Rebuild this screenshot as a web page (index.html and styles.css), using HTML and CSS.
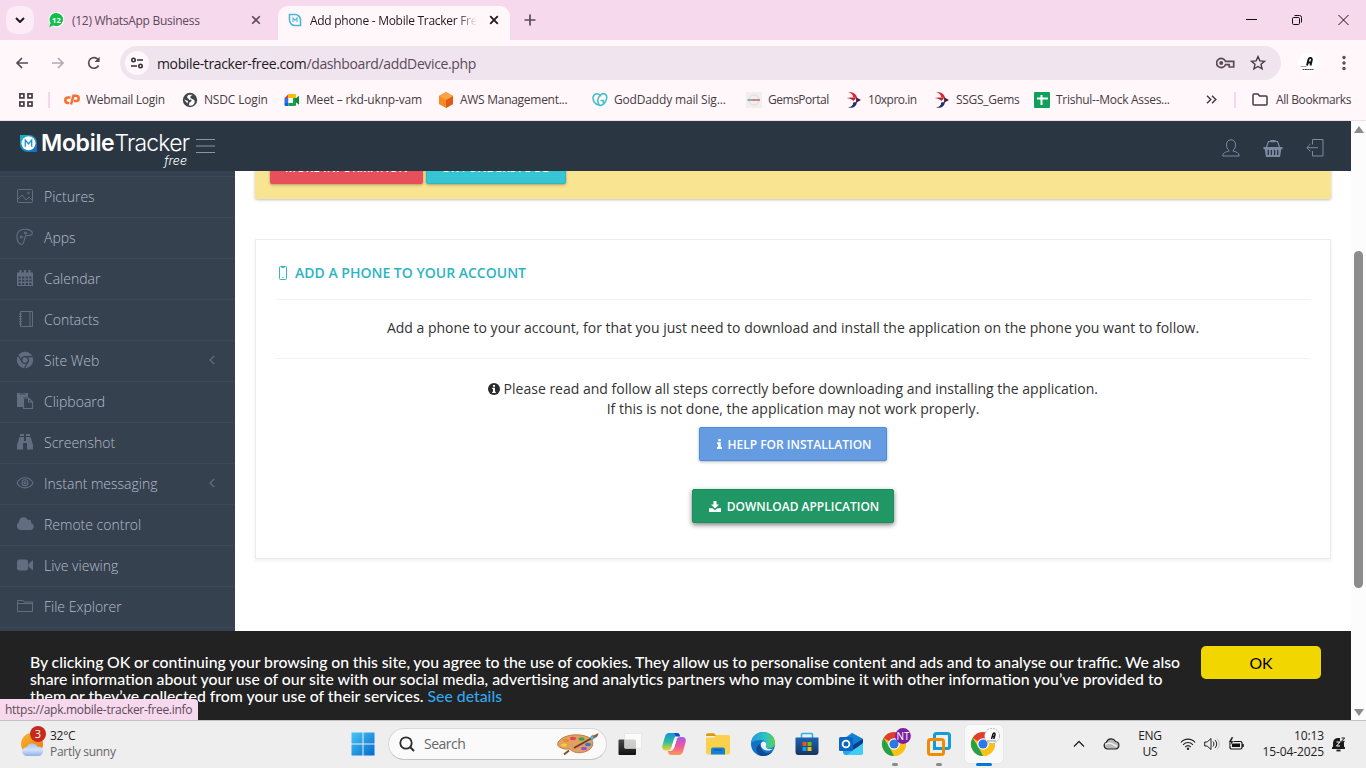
FILE: index.html
```html
<!DOCTYPE html>
<html lang="en">
<head>
<meta charset="utf-8">
<title>Add phone - Mobile Tracker Free</title>
<link rel="stylesheet" href="styles.css">
</head>
<body>
<div class="tabs">
  <div class="tab-search"><svg width="10" height="6" viewBox="0 0 10 6"><path d="M1 1l4 4 4-4" fill="none" stroke="#1f1a1e" stroke-width="2"/></svg></div>
  <div class="tab tab-wa">
    <svg class="fav" width="16" height="16" viewBox="0 0 16 16"><circle cx="8.5" cy="7.5" r="7.8" fill="#fff"/><path d="M8.5.9a6.6 6.6 0 1 1-3 12.5L1.2 15l1.4-4A6.6 6.6 0 0 1 8.5.9z" fill="#12bf4b"/><text x="8.4" y="10.8" text-anchor="middle" class="wa-num">12</text></svg>
    <span class="seg tab-title">(12) WhatsApp Business</span>
    <svg class="close" width="10" height="10" viewBox="0 0 10 10"><path d="M1.2 1.2l7.6 7.6M8.8 1.2L1.2 8.8" stroke="#5b4a58" stroke-width="1.6"/></svg>
  </div>
  <div class="tab tab-active">
    <svg class="fav" width="14" height="14" viewBox="0 0 14 14"><path d="M1.500 1.500h5.500a5.500 5.500 0 0 1 5.500 5.500v5.500H7A5.500 5.500 0 0 1 1.500 7z" fill="#fff" stroke="#4fb3d6" stroke-width="1.600"/><path d="M5 9.200V5l2 2.400L9 5v4.200" fill="none" stroke="#5fbbe0" stroke-width="1.200"/></svg>
    <span class="seg tab-title fade">Add phone - Mobile Tracker Free</span>
    <svg class="close" width="10" height="10" viewBox="0 0 10 10"><path d="M1.2 1.2l7.6 7.6M8.8 1.2L1.2 8.8" stroke="#1f1a1e" stroke-width="1.8"/></svg>
  </div>
  <svg class="newtab" width="12" height="12" viewBox="0 0 12 12"><path d="M6 .5v11M.5 6h11" stroke="#5b4a58" stroke-width="1.7"/></svg>
  <svg class="win" width="110" height="12" viewBox="0 0 110 12"><g fill="none" stroke="#111" stroke-width="1"><path d="M0 5.500h11"/><rect x="46.500" y="3.500" width="7" height="7" rx="1.200"/><path d="M48.500 1.500h5a2 2 0 0 1 2 2v5M92.500 1l10 10M102.500 1l-10 10"/></g></svg>
</div>
<div class="toolbar">
  <svg class="nav" width="14" height="12" viewBox="0 0 14 12"><path d="M13 6H2M7 1L2 6l5 5" fill="none" stroke="#5b4a58" stroke-width="1.7"/></svg>
  <svg class="nav" width="14" height="12" viewBox="0 0 14 12"><path d="M1 6h11M7 1l5 5-5 5" fill="none" stroke="#b5a9b2" stroke-width="1.7"/></svg>
  <svg class="nav" width="14" height="14" viewBox="0 0 14 14"><path d="M11.600 9.500A5.300 5.300 0 1 1 11.500 4.200" fill="none" stroke="#5b4a58" stroke-width="1.700"/><path d="M12.600.8v5.200H7.500z" fill="#5b4a58"/></svg>
  <div class="url">
    <span class="site"><svg width="12" height="12" viewBox="0 0 12 12"><g fill="none" stroke="#352d34" stroke-width="1.600"><circle cx="2.500" cy="3" r="1.700"/><path d="M6 3h6M0 9h6"/><circle cx="9.500" cy="9" r="1.700"/></g></svg></span>
    <span class="addr">mobile-tracker-free.com<span class="path">/dashboard/addDevice.php</span></span>
    <svg width="19" height="12" viewBox="0 0 19 12"><g fill="none" stroke="#5b4a58" stroke-width="1.700"><path d="M9.500 4.300A4.600 4.600 0 1 0 9.500 7.700h3.700v2.300h4.500V4.300z"/></g><circle cx="5.200" cy="6" r="2" fill="#5b4a58"/></svg>
    <svg width="16" height="16" viewBox="0 0 16 16"><path d="M8 1.600l1.900 4.300 4.700.4-3.600 3 1.100 4.600L8 11.500l-4.100 2.400L5 9.300l-3.600-3 4.700-.4z" fill="none" stroke="#463c44" stroke-width="1.400"/></svg>
  </div>
  <svg class="avatar" width="20" height="20" viewBox="0 0 20 20"><circle cx="10" cy="10" r="10" fill="#fff"/><path d="M9 12.500l1.500-6c.7-2.500 3.700-2 3.300.5L12.500 12.500M10 9.500h3.500" fill="none" stroke="#111" stroke-width="1.900"/><path d="M2.500 13.500h6" stroke="#888" stroke-width=".8"/><path d="M4.500 16.500h11" stroke="#444" stroke-width="1.200" stroke-dasharray="2 .4"/></svg>
  <svg class="dots" width="4" height="16" viewBox="0 0 4 16"><g fill="#5b4a58"><circle cx="2" cy="2.500" r="1.700"/><circle cx="2" cy="8" r="1.700"/><circle cx="2" cy="13.500" r="1.700"/></g></svg>
</div>
<div class="bookmarks">
  <svg class="apps" width="14" height="14" viewBox="0 0 14 14"><g fill="none" stroke="#463c44" stroke-width="1.700"><rect x=".9" y=".9" width="4" height="4"/><rect x="9" y=".9" width="4" height="4"/><rect x=".9" y="9" width="4" height="4"/><rect x="9" y="9" width="4" height="4"/></g></svg>
  <i class="vline"></i>
  <div class="bm-list seg">
    <span class="bm"><svg width="16" height="16" viewBox="0 0 16 16"><path d="M6.500 5.500H4A2.600 2.600 0 0 0 4 11h1.200M7 12.500L9.400 3.800h2.700a2.500 2.500 0 0 1 0 5.200H9.800" fill="none" stroke="#f6732f" stroke-width="2.500"/></svg>Webmail Login</span>
    <span class="bm wide"><svg width="16" height="16" viewBox="0 0 16 16"><circle cx="8" cy="8" r="7.200" fill="#40464b"/><path d="M10.500 3C6 2 4 4.500 6 6.500c1.500 1.200 4 .6 3.500 2.500-.4 1.200-1.700.5-2.200 2L6.800 13.500c4.200.8 6.500-2 5.700-5C11.500 7 8.500 7 8.300 5.300c0-1 1-1.600 2.200-2.300z" fill="#fff"/><path d="M2 7.500l4 1.500-.5 2.500z" fill="#fff"/></svg>NSDC Login</span>
    <span class="bm wide"><svg width="16" height="16" viewBox="0 0 16 16"><path d="M.5 6L4.500 2v4z" fill="#e8402f"/><path d="M4.500 2h6.500a1 1 0 0 1 1 1v3H4.500z" fill="#fbbc05"/><path d="M.5 6h4v5h-4z" fill="#2a74e8"/><path d="M.5 11h4v3H1.500a1 1 0 0 1-1-1z" fill="#1a5fd0"/><path d="M4.500 11H9V6h3v7a1 1 0 0 1-1 1H4.500z" fill="#12a34a"/><path d="M4.500 6H9v5H4.500z" fill="#fff"/><path d="M11 7l4-3.300v9L11 9.500z" fill="#0b8a3d"/></svg>Meet – rkd-uknp-vam</span>
    <span class="bm"><svg width="16" height="16" viewBox="0 0 16 16"><path d="M8 0l7 4v8l-7 4-7-4V4z" fill="#f58a25"/><path d="M8 8l7-4v8l-7 4z" fill="#dd5b14"/><path d="M8 0l7 4-7 4-7-4z" fill="#fba342"/></svg>AWS Management...</span>
    <span class="bm wide"><svg width="16" height="16" viewBox="0 0 17 16"><path d="M8 13.500C3 13 .5 8.500 1.300 4.500 2.600.5 7 .3 9.500 4M8 13.500C5 10 6 4.500 9.500 2.300 13 0 16.500 2 15.500 6.500 14.500 11 11 14.500 8 13.500zM9 8.500h3v3" fill="none" stroke="#45c1c9" stroke-width="1.700"/></svg>GodDaddy mail Sig...</span>
    <span class="bm tight"><svg width="16" height="16" viewBox="0 0 16 16"><path d="M0 0h16v16H0z" fill="#f1efed"/><circle cx="8" cy="8" r="5" fill="none" stroke="#dedbd8"/><path d="M1.500 8h6" stroke="#8591b4" stroke-width="1.600"/><path d="M7 8h7" stroke="#cf6870" stroke-width="1.600"/></svg>GemsPortal</span>
    <span class="bm tight"><svg width="16" height="16" viewBox="0 0 16 16"><path d="M2 .5c5-1.200 8.500 1.500 9 5.500L7 5.500C7.500 3 5.500 1 2 .5z" fill="#e02330"/><path d="M.5 6C4 5 8 5.500 10 6.500L7 9c0-1.500-2.500-2.500-6.500-3z" fill="#b8202f"/><path d="M9.500 5L15 8l-5.500 3c1-2 1-4 0-6z" fill="#4a173c"/><path d="M2 15.500c5 1.200 8.500-1 9-5.500l-4 .5c.5 2.500-1.500 4.500-5 5z" fill="#22306e"/></svg>10xpro.in</span>
    <span class="bm"><svg width="16" height="16" viewBox="0 0 16 16"><path d="M2 .5c5-1.200 8.500 1.500 9 5.500L7 5.500C7.500 3 5.500 1 2 .5z" fill="#e02330"/><path d="M.5 6C4 5 8 5.500 10 6.500L7 9c0-1.500-2.500-2.500-6.500-3z" fill="#b8202f"/><path d="M9.500 5L15 8l-5.500 3c1-2 1-4 0-6z" fill="#4a173c"/><path d="M2 15.500c5 1.200 8.500-1 9-5.500l-4 .5c.5 2.500-1.500 4.500-5 5z" fill="#22306e"/></svg>SSGS_Gems</span>
    <span class="bm"><svg width="16" height="16" viewBox="0 0 16 16"><rect width="16" height="16" rx="1" fill="#10a05b"/><path d="M7.500 3v10M3 6.500h11" stroke="#fff" stroke-width="2"/></svg>Trishul--Mock Asses...</span>
  </div>
  <svg class="more" width="11" height="9" viewBox="0 0 11 9"><path d="M1 .7l3.800 3.800L1 8.300M6 .7l3.800 3.800L6 8.300" fill="none" stroke="#463c44" stroke-width="1.500"/></svg>
  <i class="vline"></i>
  <svg class="folder" width="16" height="13" viewBox="0 0 16 13"><path d="M1 11V2a1 1 0 0 1 1-1h4l1.500 2H14a1 1 0 0 1 1 1v7a1 1 0 0 1-1 1H2a1 1 0 0 1-1-1z" fill="none" stroke="#463c44" stroke-width="1.500"/></svg>
  <span class="seg all">All Bookmarks</span>
</div>
<div class="viewport">
  <div class="page">
    <header class="top">
      <svg class="logo-mark" width="17" height="18" viewBox="0 0 17 18"><defs><linearGradient id="lm" x2="1" y2="1"><stop offset="0" stop-color="#17b8c0"/><stop offset="1" stop-color="#1667c8"/></linearGradient></defs><path d="M0 1h9a8 8 0 0 1 8 8v9H8a8 8 0 0 1-8-8z" fill="url(#lm)"/><circle cx="8.500" cy="9.300" r="7" fill="#fff"/><path d="M5.300 12.800V6l3.200 4 3.200-4v6.800" fill="none" stroke="#1b90c8" stroke-width="1.300"/></svg>
      <div class="logo"><div class="logo-line"><b>Mobile</b><span>Tracker</span></div><i>free</i></div>
      <svg class="burger" width="19" height="14" viewBox="0 0 19 14"><path d="M0 .5h19M0 7h19M0 13.500h19" stroke="#8b96a5" stroke-width="1"/></svg>
      <div class="top-icons">
        <svg width="18" height="18" viewBox="0 0 18 18"><path d="M6.800 11v1.200C3.500 13 .8 13.500.8 17h16.400c0-3.500-2.700-4-6-4.800V11c1.500-1 2.300-2.700 2.300-5 0-3.300-1.700-5.200-4.500-5.200S4.500 2.700 4.500 6c0 2.300.8 4 2.300 5z" fill="none" stroke="#7b8aa3"/></svg>
        <svg width="20" height="19" viewBox="0 0 20 19"><path d="M3.500 8L5.500 2.500H7.500M16.500 8l-2-5.500h-2" fill="none" stroke="#7b8aa3" stroke-width="1.200"/><rect x="7" y="1" width="6" height="2.200" rx="1" fill="#7b8aa3"/><path d="M.5 8h19v2.200h-1.200L17 18H3L1.700 10.200H.5z" fill="#7b8aa3"/><path d="M5.300 11v5M8.400 11v5M11.600 11v5M14.700 11v5" stroke="#2b3643" stroke-width="1.300"/></svg>
        <svg width="18" height="18" viewBox="0 0 18 18"><path d="M6.500 5.500v-5h10.500v16.500H6.500v-5M12 8.700H1M4.500 5L.8 8.700l3.700 3.700" fill="none" stroke="#7b8aa3"/></svg>
      </div>
    </header>
    <div class="body">
      <nav class="side">
        <div class="stub"></div>
        <a><svg width="18" height="18" viewBox="0 0 18 18"><g fill="none" stroke="#626e80"><rect x="1.500" y="2.500" width="15" height="13" rx=".8"/><path d="M2 12l4-4 4 5 3-3 3.500 3.500"/><circle cx="12.500" cy="6" r=".8"/></g></svg>Pictures</a>
        <a><svg width="18" height="18" viewBox="0 0 18 18"><g fill="none" stroke="#626e80" stroke-width="1.100"><path d="M4 2.500C8 .3 15 1 16.300 4.500 17 7 14 7.800 11 7.500c-2 0-2.200 2-2.700 4C8 14 7 16.800 5.300 16.500 2.500 15.500 1 12 1 8.500 1 6 2 3.500 4 2.500z"/><circle cx="9.500" cy="5" r="1"/><circle cx="5.300" cy="9" r="1"/></g></svg>Apps</a>
        <a><svg width="18" height="18" viewBox="0 0 18 18"><path d="M1 3.500h16V17H1z" fill="#626e80"/><path d="M4.500 1v4M9 1v4M13.500 1v4" stroke="#626e80" stroke-width="2"/><path d="M2.500 7.500h2.300v2H2.500zM6 7.500h2.300v2H6zM9.700 7.500H12v2H9.700zM13.200 7.500h2.300v2h-2.300zM2.500 10.700h2.300v2H2.500zM6 10.700h2.300v2H6zM9.700 10.700H12v2H9.700zM13.200 10.700h2.300v2h-2.300zM2.500 13.900h2.300v2H2.500zM6 13.900h2.300v2H6zM9.700 13.900H12v2H9.700zM13.200 13.900h2.300v2h-2.300z" fill="#364150"/></svg>Calendar</a>
        <a><svg width="18" height="18" viewBox="0 0 18 18"><g fill="none" stroke="#626e80"><path d="M4.500 1.500h12v15h-12zM14 1.500v15M3 4h3M3 6.500h3M3 9h3M3 11.500h3M3 14h3"/></g></svg>Contacts</a>
        <a><svg width="18" height="18" viewBox="0 0 18 18"><circle cx="9" cy="9" r="8.200" fill="#626e80"/><circle cx="9" cy="9" r="3.400" fill="none" stroke="#364150" stroke-width="1.300"/><path d="M9 5.600h8M6 10.700L2 4M12 10.700L8.500 17" stroke="#364150" stroke-width="1.200"/></svg>Site Web<svg class="chev" width="6" height="10" viewBox="0 0 6 10"><path d="M5.200 1L1 5l4.200 4" fill="none" stroke="#626e80" stroke-width="1.200"/></svg></a>
        <a><svg width="18" height="18" viewBox="0 0 18 18"><path d="M1 1h11v4H7v10H1z" fill="#626e80"/><path d="M3.500 2h6" stroke="#364150"/><path d="M7.500 6h5l4 4v6.500h-9zM12.500 6v4h4" fill="#364150" stroke="#626e80" stroke-width="1.200"/></svg>Clipboard</a>
        <a><svg width="18" height="18" viewBox="0 0 18 18"><path d="M4 1h4v2H4zM10 1h4v2h-4zM3.500 4H8v4h2V4h4.500L17 12v4.500h-6V10H7v6.500H1V12z" fill="#626e80"/></svg>Screenshot</a>
        <a><svg width="18" height="18" viewBox="0 0 18 18"><g fill="none" stroke="#626e80" stroke-width="1.100"><path d="M1 9c3.500-7 12.500-7 16 0-3.500 6.500-12.500 6.500-16 0z"/><circle cx="9" cy="8.800" r="3"/><circle cx="9" cy="8.800" r="1"/></g></svg>Instant messaging<svg class="chev" width="6" height="10" viewBox="0 0 6 10"><path d="M5.200 1L1 5l4.200 4" fill="none" stroke="#626e80" stroke-width="1.200"/></svg></a>
        <a><svg width="18" height="18" viewBox="0 0 18 18"><path d="M4.500 15A4.200 4.200 0 0 1 3 7.200C3 2 10 .5 11.800 5c2.500-.8 4 1 3.200 3 4 1.200 3.500 7-.5 7z" fill="#626e80"/></svg>Remote control</a>
        <a><svg width="18" height="18" viewBox="0 0 18 18"><rect x="1" y="3.500" width="11" height="11" rx="2.300" fill="#626e80"/><path d="M12.500 8L17 4v10.500l-4.500-4z" fill="#626e80"/></svg>Live viewing</a>
        <a><svg width="18" height="18" viewBox="0 0 18 18"><path d="M1.500 14.500v-11H7l1 1.500h8.500v9.500zM1.500 6.500h15" fill="none" stroke="#626e80"/></svg>File Explorer</a>
        <div class="tail"></div>
      </nav>
      <main class="main">
        <div class="alert"><span class="btn red">More information</span><span class="btn teal">OK I understood</span></div>
        <section class="panel">
          <h1><svg width="10" height="16" viewBox="0 0 10 16"><rect x="1.500" y="1.500" width="7" height="13" rx="1" fill="none" stroke="#32b6c4"/><path d="M3.500 2.500h3M4.500 12.500h1" stroke="#32b6c4"/></svg>Add a phone to your account</h1>
          <p class="lead">Add a phone to your account, for that you just need to download and install the application on the phone you want to follow.</p>
          <p class="note"><svg width="12" height="12" viewBox="0 0 12 12"><circle cx="6" cy="6" r="6" fill="#2b2b2b"/><path d="M5 2h2v1.700H5zM4.200 4.800H7V8.700h.8V10H4.200V8.700H5V6h-.8z" fill="#fff"/></svg> Please read and follow all steps correctly before downloading and installing the application.<br>If this is not done, the application may not work properly.</p>
          <div class="btn blue"><svg width="5" height="10" viewBox="0 0 6 12"><path d="M1.500 0H4.500V2.600H1.500zM0 4h4.500v5.500H6V12H0V9.500h1.300V6H0z" fill="#fff"/></svg>Help for installation</div>
          <div class="btn green"><svg width="12" height="11" viewBox="0 0 12 11"><path d="M4.500 0h3v3.500H10L6 7.600 2 3.500h2.500zM0 7.200h3.500L6 9.300l2.500-2.100H12V11H0z" fill="#fff"/></svg>Download application</div>
        </section>
      </main>
    </div>
    <div class="cookie">
      <p><span class="first">By clicking OK or continuing your browsing on this site, you agree to the use of cookies. They allow us to personalise content and ads and to analyse our traffic. We also</span><br>share information about your use of our site with our social media, advertising and analytics partners who may combine it with other information you’ve provided to<br>them or they’ve collected from your use of their services. <a>See details</a></p>
      <span class="ok">OK</span>
    </div>
    <div class="status seg">https://apk.mobile-tracker-free.info</div>
  </div>
  <div class="scroll"><i class="up"></i><i class="thumb"></i><i class="down"></i></div>
</div>
<div class="taskbar seg">
  <div class="weather">
    <svg width="28" height="32" viewBox="0 0 28 32"><defs><linearGradient id="sun" x2="1" y2="1"><stop offset="0" stop-color="#f7b62c"/><stop offset="1" stop-color="#ef7614"/></linearGradient><linearGradient id="cl" x2="0" y2="1"><stop offset="0" stop-color="#a9c4ef"/><stop offset=".5" stop-color="#d3e2fa"/><stop offset="1" stop-color="#8fb0e8"/></linearGradient></defs><circle cx="12" cy="18" r="11" fill="url(#sun)"/><path d="M7 30a4.500 4.500 0 0 1-.3-9 6 6 0 0 1 10.800 0c4-1 6 2 5.500 4.500-.3 2.500-2 4.500-4.500 4.500z" fill="url(#cl)"/><circle cx="18" cy="8" r="8" fill="#c42b1c"/><text x="18" y="12.300" text-anchor="middle" class="badge-num">3</text></svg>
    <div>32°C<br><em>Partly sunny</em></div>
  </div>
  <svg class="start" width="24" height="24" viewBox="0 0 24 24"><defs><linearGradient id="st" gradientUnits="userSpaceOnUse" x1="0" y1="0" x2="24" y2="24"><stop offset="0" stop-color="#4cc9f9"/><stop offset="1" stop-color="#0067cc"/></linearGradient></defs><path d="M.5.5h11v11H.5zM12.500.5h11v11h-11zM.5 12.500h11v11H.5zM12.500 12.500h11v11h-11z" fill="url(#st)"/></svg>
  <div class="search">
    <svg width="16" height="16" viewBox="0 0 16 16"><circle cx="7" cy="7" r="5.700" fill="none" stroke="#2b2b2b" stroke-width="1.800"/><path d="M11 11l4 4" stroke="#2b2b2b" stroke-width="2"/></svg>
    <span>Search</span>
    <svg class="palette" width="42" height="23" viewBox="0 0 42 23"><path d="M2 8C7 1.500 22 0 31 4c7 3 6 11-1 14-8 3.500-14 1-16-1-1.500-2-5 0-8-1.500C1 14-1 12 2 8z" fill="#dfa066" stroke="#c17f43"/><ellipse cx="9" cy="7.500" rx="3" ry="1.600" fill="#f08a18"/><ellipse cx="16" cy="5.500" rx="3" ry="1.700" fill="#e8404c"/><ellipse cx="24.500" cy="6" rx="3" ry="1.700" fill="#35a540"/><ellipse cx="31" cy="11.500" rx="3" ry="1.700" fill="#2b79d4"/><ellipse cx="27" cy="15.500" rx="3" ry="1.700" fill="#a04bdf"/><ellipse cx="7" cy="12" rx="3" ry="1.600" fill="#f8cf28"/><path d="M17 15L35 5" stroke="#6f3d1a" stroke-width="2"/><path d="M34 6l3-3" stroke="#5bafe0" stroke-width="4"/><path d="M36 4.500C36 1 39 2 41.500 0 41 4 39 5.500 36 4.500z" fill="#a35a24"/><path d="M7 21.500l5-4" stroke="#8a4e22" stroke-width="2"/></svg>
  </div>
  <div class="task-icons">
    <span><svg width="24" height="24" viewBox="0 0 24 24"><defs><linearGradient id="tv" x2="0" y2="1"><stop offset="0" stop-color="#4a4a48"/><stop offset="1" stop-color="#111"/></linearGradient></defs><rect x=".5" y="7.500" width="17.500" height="15.500" rx="1" fill="url(#tv)"/><rect x="6.500" y="1.500" width="17" height="15" rx="1" fill="#fff" fill-opacity=".75" stroke="#ddd" stroke-width=".6"/></svg></span>
    <span><svg width="24" height="24" viewBox="0 0 24 24"><defs><linearGradient id="cpa" x2="0" y2="1"><stop offset="0" stop-color="#168fe0"/><stop offset=".5" stop-color="#2bbf9c"/><stop offset="1" stop-color="#f4d32c"/></linearGradient><linearGradient id="cpb" x2="0" y2="1"><stop offset="0" stop-color="#a55be8"/><stop offset=".5" stop-color="#f0569c"/><stop offset="1" stop-color="#fb9a55"/></linearGradient></defs><path d="M7 1h8c2 0 2.500 1.500 3 3h-3c-2 0-2.500 1.500-3 3l-2.500 8c-.5 2-1.500 3.500-3.500 3.500H3.500C.5 18.500-.3 16 .5 13L3 4.500C3.700 2.300 5 1 7 1z" fill="url(#cpa)"/><path d="M12 1h3c2 0 2.500 1.500 3 3.500h-4z" fill="#1749c8"/><path d="M17 23H9c-2 0-2.700-1.500-3-4h2.500c2 0 3-1.500 3.500-3l2.500-8c.6-2 1.500-3 3.500-3h2.500c3 0 3.800 2.500 3 5.500L21 19.500c-.7 2.200-2 3.500-4 3.500z" fill="url(#cpb)"/><path d="M14.500 8L12 16H9.500L12 8z" fill="#fff"/></svg></span>
    <span><svg width="24" height="24" viewBox="0 0 24 24"><path d="M0 3.500C0 2 .7 1.300 2 1.300h6L10.500 4H0z" fill="#d99a12"/><path d="M0 5.500h8l2.500-2.500H22a2 2 0 0 1 2 2v15.500a2 2 0 0 1-2 2H2a2 2 0 0 1-2-2z" fill="#fbd04a"/><path d="M5 22.500v-5a2 2 0 0 1 2-2h10a2 2 0 0 1 2 2v5z" fill="#1281d6"/><path d="M8 18h8" stroke="#0b5ea8" stroke-width="1.500"/></svg></span>
    <span><svg width="24" height="24" viewBox="0 0 24 24"><defs><linearGradient id="ed" x2="1"><stop offset="0" stop-color="#1d9be0"/><stop offset=".6" stop-color="#2cc3c4"/><stop offset="1" stop-color="#5ed24a"/></linearGradient></defs><circle cx="12" cy="12" r="12" fill="#1172c8"/><path d="M0 11C1 4 6 0 12 0c7 0 12 5 12 10.500 0 4-3 6-6.500 6-3 0-3.500-1-2.500-2.500 1.500-4-2-6-5-6C6 8 2 9 0 11z" fill="url(#ed)"/><path d="M9.500 12c-1 5 3 9 7.500 9 2 0 4-1 5-2-2 3-6 5-10 5C7 24 5 19 5.500 16c.4-2 2-3.500 4-4z" fill="#0f4a94"/><path d="M15 14c1-3-1-5-3-4.500-3 1-3 5 0 7.500 3 2.300 8 2 10-.5-3 1.200-8 .5-7-2.500z" fill="#eef"/></svg></span>
    <span><svg width="24" height="24" viewBox="0 0 24 24"><defs><linearGradient id="ms" x2="0" y2="1"><stop offset="0" stop-color="#1a65b5"/><stop offset="1" stop-color="#17345f"/></linearGradient></defs><path d="M6.500 6V2.500a1 1 0 0 1 1-1h9a1 1 0 0 1 1 1V6" fill="none" stroke="#28b3ee" stroke-width="1.600"/><path d="M.5 5.500h23v14.500a3 3 0 0 1-3 3h-17a3 3 0 0 1-3-3z" fill="url(#ms)"/><path d="M7.500 10h4v4h-4z" fill="#f25022"/><path d="M12.500 10h4v4h-4z" fill="#7fba00"/><path d="M7.500 15h4v4h-4z" fill="#00a4ef"/><path d="M12.500 15h4v4h-4z" fill="#ffb900"/></svg></span>
    <span><svg width="24" height="24" viewBox="0 0 24 24"><path d="M4 7l9-6 11 6v13a3 3 0 0 1-3 3H7a3 3 0 0 1-3-3z" fill="#2aa6e8"/><path d="M13 1l11 6-10 8-9-7z" fill="#1380d8"/><path d="M24 7v5l-12 7-3-3z" fill="#0d3c8a"/><path d="M24 11v9a3 3 0 0 1-3 3H8z" fill="#40cdf5"/><rect x="0" y="5" width="14" height="14" rx="1.500" fill="#0c67c4"/><circle cx="7" cy="12" r="3.400" fill="none" stroke="#fff" stroke-width="1.800"/></svg></span>
    <span class="run"><svg width="32" height="32" viewBox="-3 -4 32 32"><circle cx="12" cy="12" r="12" fill="#fbc116"/><path d="M12 12L1.600 6A12 12 0 0 1 22.400 6z" fill="#e33b2e"/><path d="M1.600 6L8 16l4 8A12 12 0 0 1 1.600 6z" fill="#25a148"/><path d="M12 6.500h10.700A12 12 0 0 1 12 24l5-9z" fill="#fbc116"/><circle cx="12" cy="12" r="5.800" fill="#fff"/><circle cx="12" cy="12" r="4.600" fill="#2b78e8"/><circle cx="21" cy="4" r="7.900" fill="#7b1fa2"/><text x="21" y="7.500" text-anchor="middle" class="nt">NT</text></svg></span>
    <span class="run"><svg width="24" height="24" viewBox="0 0 24 24"><rect x="7.500" y="1.500" width="15" height="15" rx="2" fill="none" stroke="#149bd7" stroke-width="3"/><rect x="1.500" y="7.500" width="15" height="15" rx="2" fill="none" stroke="#f28b00" stroke-width="3"/><path d="M7.500 10v6.500H14" fill="none" stroke="#149bd7" stroke-width="3"/></svg></span>
    <span class="run current"><svg width="32" height="32" viewBox="-3 -4 32 32"><circle cx="12" cy="12" r="12" fill="#fbc116"/><path d="M12 12L1.600 6A12 12 0 0 1 22.400 6z" fill="#e33b2e"/><path d="M1.600 6L8 16l4 8A12 12 0 0 1 1.600 6z" fill="#25a148"/><path d="M12 6.500h10.700A12 12 0 0 1 12 24l5-9z" fill="#fbc116"/><circle cx="12" cy="12" r="5.800" fill="#fff"/><circle cx="12" cy="12" r="4.600" fill="#2b78e8"/><circle cx="21" cy="4" r="7.500" fill="#fff" stroke="#999" stroke-width=".7" stroke-dasharray="2 1"/><path d="M20.500 7l1.500-5c.5-1.500 2.300-1.300 2 .5L22.800 7M21 4.500h2.500" fill="none" stroke="#111" stroke-width="1.500"/><path d="M16 9h9" stroke="#777" stroke-width=".8"/></svg></span>
  </div>
  <div class="tray">
    <svg class="t1" width="12" height="8" viewBox="0 0 12 8"><path d="M1 6.500l5-5 5 5" fill="none" stroke="#222" stroke-width="1.300"/></svg>
    <svg class="t2" width="17" height="12" viewBox="0 0 17 12"><path d="M4.500 11a3.500 3.500 0 0 1-1-6.800c1.500-4 7-4.500 9-.7 4.500.5 4.500 7 0 7.500z" fill="#b9b9b9" stroke="#222" stroke-width="1.200"/><path d="M2 6.500C6 4 8 5 14 8.500" fill="none" stroke="#eee" stroke-width="1.500"/></svg>
    <div class="lang">ENG<br>US</div>
    <svg class="t3" width="16" height="12" viewBox="0 0 16 12"><g fill="none" stroke="#222" stroke-width="1.100"><path d="M.8 4.500c4-4.500 10.500-4.500 14.400 0M3 6.800c3-3 7-3 10 0M5.200 9c1.700-1.600 4-1.600 5.600 0"/></g><circle cx="8" cy="10.700" r="1.200" fill="#222"/></svg>
    <svg class="t4" width="16" height="14" viewBox="0 0 16 14"><path d="M.7 5h2.500L7 1.500v11L3.200 9H.7z" fill="none" stroke="#222"/><path d="M9 4.500c1.200 1.500 1.200 3.500 0 5M11 3c2.200 2.500 2.200 5.500 0 8" fill="none" stroke="#222"/><path d="M13 1.500c3 3.500 3 7.500 0 11" fill="none" stroke="#bbb"/></svg>
    <svg class="t5" width="17" height="14" viewBox="0 0 17 14"><rect x="2" y="4.500" width="12" height="7.500" rx="1.500" fill="none" stroke="#111" stroke-width="1.200"/><path d="M4 6.500h8v3.500H4z" fill="#111"/><path d="M15 7v3" stroke="#111" stroke-width="1.500"/><path d="M3.500 0L.5 5.500H3L2 9l4-5H3.500L5.500 0z" fill="#111" stroke="#eee" stroke-width=".4"/></svg>
    <div class="clock">10:13<br>15-04-2025</div>
    <svg class="t6" width="14" height="15" viewBox="0 0 14 15"><path d="M0 12V10.500l1-1V6A5 5 0 0 1 7 1h1v3.500h4V9.500l1 1V12z" fill="#1a1a1a"/><path d="M4.500 13.500h4" stroke="#1a1a1a" stroke-width="1.800"/><path d="M4.500 5h3.500L4.500 9H8" fill="none" stroke="#fff"/><path d="M9.500 1h3.200L9.500 4.300h3.200" fill="none" stroke="#1a1a1a"/></svg>
  </div>
</div>
</body>
</html>
```
FILE: styles.css
```css
* { box-sizing: border-box; }
body { margin: 0; width: 1366px; height: 768px; overflow: hidden; font-family: "Open Sans", sans-serif; background: #fff7fa; display: flex; flex-direction: column; }
svg { display: block; flex: none; }
p, h1 { margin: 0; }
.seg { font-size: 12px; letter-spacing: -.28px; white-space: nowrap; }
.tight { letter-spacing: -.48px; }
.wide { letter-spacing: -.17px; }
.tabs { height: 40px; background: #f7d9ed; display: flex; align-items: center; padding-left: 6px; }
.tab-search { width: 28px; height: 28px; border-radius: 10px; background: #fdebf7; display: flex; align-items: center; justify-content: center; margin-right: 14px; }
.tab { display: flex; align-items: center; }
.tab-wa { width: 230px; }
.tab-title { flex: 1; margin-left: 8px; color: #5b4a58; }
.tab-wa .close { margin-right: 17px; }
.tab-active { width: 232px; height: 34px; margin-top: 6px; padding: 0 16px 6px 10px; background: #fff7fa; border-radius: 10px 10px 0 0; }
.tab-active .tab-title { color: #1f1a1e; overflow: hidden; }
.tab-active .fade { width: 167px; flex: none; -webkit-mask-image: linear-gradient(90deg, #000 88%, transparent); mask-image: linear-gradient(90deg, #000 88%, transparent); }
.tab-active .close { margin-left: 12px; }
.newtab { margin-left: 14px; }
.win { margin-left: auto; margin-right: 10px; }
.toolbar { height: 46px; display: flex; align-items: center; padding-left: 15px; }
.nav { margin-right: 22px; }
.url { width: 1161px; height: 34px; margin-left: -3px; border-radius: 17px; background: #f0e5ee; display: flex; align-items: center; padding: 0 15px 0 5px; }
.url > svg { margin-left: 15px; }
.site { width: 24px; height: 24px; border-radius: 50%; background: #fff7fa; display: flex; align-items: center; justify-content: center; }
.addr { flex: 1; margin-left: 8px; font-size: 14px; letter-spacing: -.37px; white-space: nowrap; color: #1f1a1e; }
.path { color: #5b4a58; }
.avatar { margin-left: 17px; }
.dots { margin-left: 24px; }
.bookmarks { height: 35px; padding: 0 15px 7px 19px; display: flex; align-items: center; border-bottom: 1px solid #eddfe8; }
.vline { width: 2px; height: 16px; background: #fbd3ef; flex: none; }
.apps + .vline { margin: 0 14px 0 15px; }
.bm-list { flex: none; width: 1142px; display: grid; grid-template-columns: 118px 102px 154px 154px 154px 100px 88px 100px 172px; color: #463c44; }
.bm { display: flex; align-items: center; gap: 6px; }
.more + .vline { margin: 0 16px 0 17px; }
.all { margin-left: 8px; color: #463c44; letter-spacing: -.38px; }
.viewport { height: 599px; display: flex; background: #fff; }
.page { position: relative; width: 1351px; display: flex; flex-direction: column; }
.top { height: 50px; background: #2b3643; display: flex; align-items: flex-start; padding: 0 27px 0 20px; }
.logo-mark { margin: 13px 4px 0 0; }
.logo { width: 149px; font-family: Inter, sans-serif; color: #fff; }
.logo-line { font-size: 23px; line-height: 26px; margin-top: 9px; white-space: nowrap; }
.logo b { font-weight: 600; letter-spacing: -.3px; }
.logo-line span { font-weight: 300; letter-spacing: -.8px; }
.logo i { display: block; text-align: right; font-size: 12.500px; line-height: 14px; margin: -2px 3px 0 0; font-weight: 300; }
.burger { margin: 18px 0 0 6px; }
.top-icons { margin: 18px 0 0 auto; display: flex; gap: 23px; }
.top-icons svg:first-child { margin-right: 0; }
.body { height: 460px; display: flex; overflow: hidden; }
.side { width: 235px; background: #364150; flex: none; }
.stub { height: 5px; }
.side a { display: flex; align-items: center; height: 41px; border-top: 1px solid #3d4957; padding: 0 20px 2px 16px; font-size: 14px; font-weight: 300; color: #b4bcc8; }
.side a svg { margin-right: 10px; }
.side a .chev { margin: 0 0 0 auto; }
.tail { border-top: 1px solid #3d4957; }
.main { flex: 1; padding: 0 20px; }
.alert { height: 88px; margin-top: -60px; padding: 39px 15px 0; background: #f9e491; border-radius: 2px; box-shadow: 0 1px 3px rgba(0,0,0,.25); display: flex; gap: 3px; }
.btn { height: 34px; border-radius: 2px; color: #fff; font-size: 12px; font-weight: 600; text-transform: uppercase; display: flex; align-items: center; justify-content: center; box-shadow: 0 1px 3px rgba(0,0,0,.3); border: 1px solid transparent; white-space: nowrap; }
.red { width: 153px; background: #e7505a; }
.teal { width: 140px; background: #36c6d3; border-color: #2bb8c4; }
.panel { margin-top: 40px; height: 320px; border: 1px solid #e7ecf1; padding: 0 20px; box-shadow: 0 2px 3px 1px rgba(0,0,0,.04); color: #333; font-size: 14px; text-align: center; display: flex; flex-direction: column; align-items: center; }
.panel h1 { align-self: stretch; height: 60px; padding-top: 6px; border-bottom: 1px solid #eef1f5; font-size: 14px; font-weight: 600; text-transform: uppercase; color: #2db4c2; display: flex; align-items: center; gap: 7px; padding-left: 2px; }
.lead { align-self: stretch; height: 59px; line-height: 56px; border-bottom: 1px solid #eef1f5; white-space: nowrap; }
.note { margin-top: 20px; line-height: 20px; white-space: nowrap; }
.note svg { display: inline-block; vertical-align: -1px; }
.blue { width: 188px; margin-top: 8px; background: #659be0; border-color: #4b8cdc; gap: 6px; padding-left: 2px; }
.green { width: 202px; margin-top: 28px; background: #209765; border-color: #1a8f5c; gap: 6px; padding-left: 2px; box-shadow: 0 2px 5px rgba(0,0,0,.5); }
.cookie { height: 89px; background: #222; display: flex; color: #fff; padding: 15px 30px; font-family: Lato, sans-serif; font-size: 15.800px; line-height: 17px; }
.cookie p { flex: 1; width: 0; padding-top: 7px; white-space: nowrap; font-weight: 500; }
.first { word-spacing: -.28px; }
.cookie a { color: #31a8f0; }
.ok { flex: none; width: 120px; height: 33px; border-radius: 5px; background: #f1d600; color: #000; display: flex; align-items: center; justify-content: center; padding-bottom: 1px; }
.status { position: absolute; left: 0; bottom: 0; height: 21px; width: 198px; padding-left: 5px; line-height: 21px; background: #f7d9ed; color: #5b4a58; border-radius: 0 4px 0 0; }
.scroll { width: 15px; background: #fcfcfc; display: flex; flex-direction: column; align-items: center; }
.up { border: 5px solid transparent; border-top: 0; border-bottom: 7px solid #8b8b8b; margin-top: 5px; }
.thumb { width: 9px; height: 337px; border-radius: 5px; background: #8b8b8b; margin-top: 118px; }
.down { border: 5px solid transparent; border-bottom: 0; border-top: 7px solid #8b8b8b; margin: auto 0 4px; }
.taskbar { height: 48px; background: #eee; border-top: 1px solid #c2c2c2; padding-bottom: 1px; display: flex; align-items: center; color: #222; line-height: 16px; }
.weather { display: flex; width: 351px; padding-left: 20px; gap: 2px; align-items: center; }
.weather em { font-style: normal; color: #666; }
.weather svg { margin-top: -4px; }
.badge-num { font: 11px "Open Sans"; fill: #fff; letter-spacing: 0; }
.wa-num { font: bold 7.500px "Open Sans"; fill: #fff; }
.nt { font: 10px "Open Sans"; fill: #fff; letter-spacing: 0; }
.search { width: 219px; height: 32px; margin-left: 13px; border-radius: 16px; background: #fafafa; border: 1px solid #d9d9d9; border-bottom-color: #c4c4c4; display: flex; align-items: center; padding: 0 7px 0 10px; font-size: 14px; letter-spacing: -.5px; color: #666; }
.search span { margin-left: 9px; }
.palette { margin-left: auto; }
.task-icons { display: flex; margin-left: 1px; }
.task-icons span { width: 44.200px; height: 40px; display: flex; align-items: center; justify-content: center; position: relative; }
.run::after { content: ""; position: absolute; left: 19px; bottom: -2px; width: 6px; height: 3px; border-radius: 2px; background: #8b8b8b; }
.current::before { content: ""; position: absolute; left: 3px; top: 1px; width: 38px; height: 38px; border-radius: 4px; background: #f9f9f9; box-shadow: 0 0 1px #bbb; }
.run svg { position: relative; }
.task-icons .current::after { left: 14px; width: 16px; background: #0078d4; }
.tray { display: flex; align-items: center; margin-left: auto; padding-right: 20px; }
.t2 { margin-left: 18px; }
.lang { text-align: center; width: 24px; margin: 0 18px; }
.t4 { margin-left: 8px; }
.t5 { margin-left: 8px; }
.clock { width: 63px; margin-left: 16px; text-align: right; letter-spacing: -.1px; }
.t6 { margin-left: 8px; }
```
